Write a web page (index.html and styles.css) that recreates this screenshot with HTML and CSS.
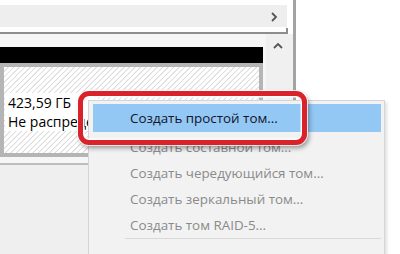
FILE: index.html
```html
<!DOCTYPE html>
<html lang="ru">
<head>
<meta charset="utf-8">
<link rel="stylesheet" href="styles.css">
</head>
<body>
<div class="window">
  <div class="top">
    <div class="htrack">
      <svg class="chev" width="8" height="10" viewBox="0 0 8 10"><polyline points="2,1 6,5 2,9" fill="none" stroke="#555" stroke-width="1.8"/></svg>
    </div>
    <div class="hline"></div>
  </div>
  <div class="lower">
    <div class="disks">
      <div class="disk-head"></div>
      <div class="disk-body">
        <div class="label">
          <div>423,59 ГБ</div>
          <div>Не распределена</div>
        </div>
      </div>
      <div class="disk2"></div>
    </div>
    <div class="vscroll">
      <svg class="chev-up" width="10" height="7" viewBox="0 0 10 7"><polyline points="1,6 5,2 9,6" fill="none" stroke="#555" stroke-width="1.8"/></svg>
    </div>
  </div>
</div>

<div class="menu">
  <div class="item active">Создать простой том...</div>
  <div class="item">Создать составной том...</div>
  <div class="item">Создать чередующийся том...</div>
  <div class="item">Создать зеркальный том...</div>
  <div class="item">Создать том RAID-5...</div>
  <div class="sep"></div>
</div>

<div class="callout"></div>
</body>
</html>
```

FILE: styles.css
```css
html, body {
  margin: 0;
  padding: 0;
}
body {
  width: 400px;
  height: 254px;
  overflow: hidden;
  background: #ffffff;
  font-family: "Open Sans", "Noto Sans", sans-serif;
  position: relative;
}
.window {
  width: 293px;
  height: 254px;
  border-right: 3px solid #a3a3a3;
  display: flex;
  flex-direction: column;
}
.top {
  height: 34px;
  padding-top: 5px;
  box-sizing: border-box;
  background: #ffffff;
}
.htrack {
  width: 287px;
  height: 22px;
  background: #eeeeee;
  display: flex;
  align-items: center;
  justify-content: flex-end;
}
.chev {
  margin-right: 9px;
  margin-top: 1px;
}
.hline {
  width: 286px;
  height: 4px;
  margin-top: 1px;
  border-bottom: 2px solid #8e8e8e;
  border-right: 2px solid #8e8e8e;
}
.lower {
  flex: 1;
  display: flex;
}
.disks {
  width: 266px;
  background: #f6f6f6;
  padding-top: 13px;
  display: flex;
  flex-direction: column;
}
.disk-head {
  width: 263px;
  height: 16px;
  background: #000000;
}
.disk-body {
  width: 263px;
  height: 94px;
  box-sizing: border-box;
  border: 4px solid #b5b5b5;
  background: repeating-linear-gradient(135deg, #ffffff 0px, #ffffff 2.4px, #dcdcdc 2.9px, #dcdcdc 3.4px, #ffffff 3.9px);
  background-color: #ffffff;
  padding-top: 26px;
  padding-left: 1px;
}
.label {
  width: 90px;
  background: #ffffff;
  padding-left: 3px;
  font-size: 14px;
  line-height: 19px;
  color: #000000;
  white-space: nowrap;
}
.disk2 {
  margin-top: 6px;
  flex: 1;
  border-top: 2px solid #bdbdbd;
  background: #efefef;
}
.vscroll {
  flex: 1;
  background: #f0f0f0;
  display: flex;
  justify-content: center;
  padding-top: 8px;
  align-items: flex-start;
  padding-right: 4px;
}
.menu {
  position: absolute;
  left: 88px;
  top: 100px;
  width: 297px;
  height: 180px;
  box-sizing: border-box;
  background: #f2f2f2;
  border: 1px solid #d5d5d5;
  box-shadow: 2px 2px 3px rgba(0, 0, 0, 0.12);
  padding: 3px 3px 0 4px;
  display: flex;
  flex-direction: column;
}
.item {
  height: 26px;
  line-height: 26px;
  padding-left: 37px;
  font-size: 13.4px;
  color: #8a8a8a;
  white-space: nowrap;
}
.item.active {
  height: 28px;
  line-height: 28px;
  margin-bottom: 2px;
  background: #93c7f4;
  color: #14142a;
}
.sep {
  height: 1px;
  margin: 0 0 4px 32px;
  background: #d9d9d9;
}
.callout {
  position: absolute;
  left: 78px;
  top: 91px;
  width: 229px;
  height: 54px;
  box-sizing: border-box;
  border: 5px solid #d9222a;
  border-radius: 11px;
  box-shadow: inset 0 0 0 1.5px #ffffff, 0 0 0 1px rgba(255, 255, 255, 0.8), 2px 3px 5px rgba(0, 0, 0, 0.4);
}
```
